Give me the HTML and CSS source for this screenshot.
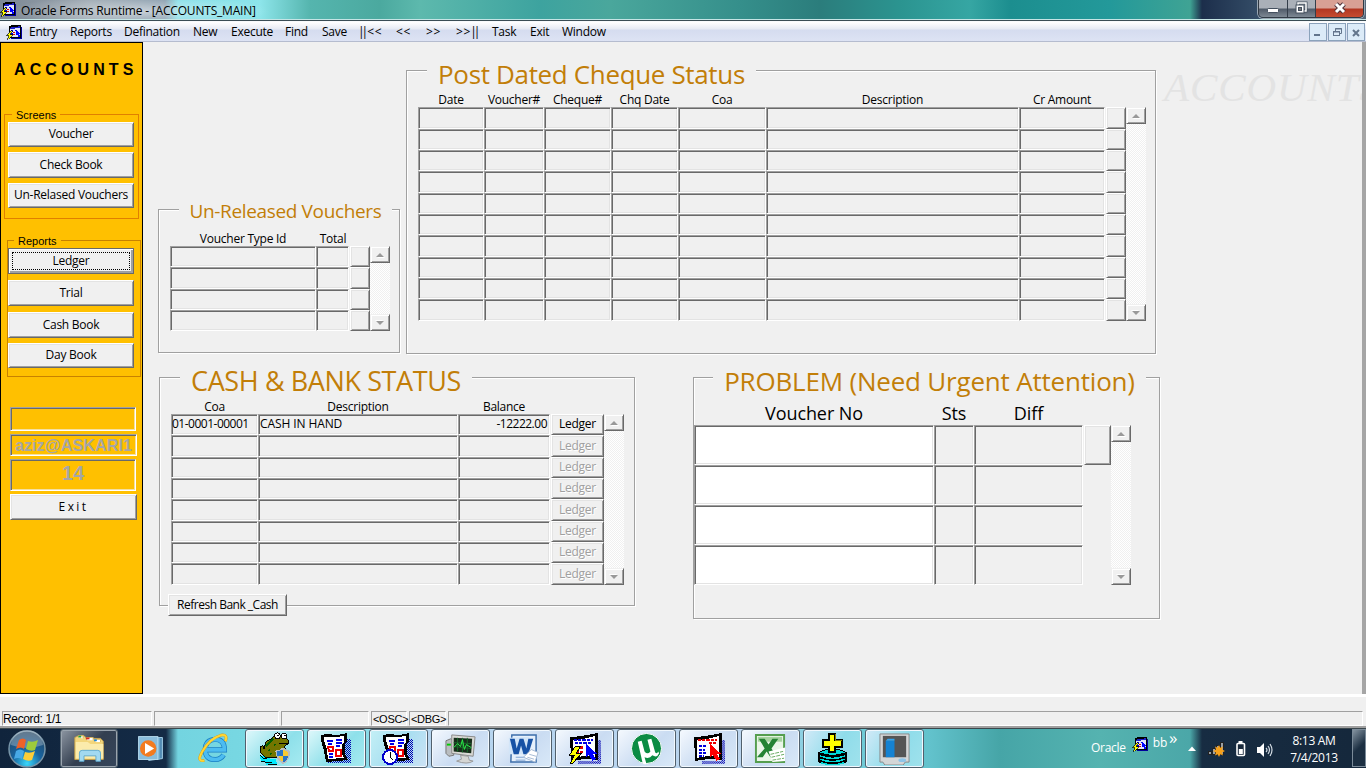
FILE: index.html
```html
<!DOCTYPE html>
<html lang="en">
<head>
<meta charset="utf-8">
<title>Oracle Forms Runtime - [ACCOUNTS_MAIN]</title>
<link rel="stylesheet" href="styles.css">
</head>
<body>
<svg class="defs" aria-hidden="true">
  <symbol id="forms" viewBox="0 0 32 32">
    <path d="M5 7L10 4H28V28H5Z" fill="#000"/><path d="M28 8H31V31H10V28H28Z" fill="#00009c"/>
    <path d="M7 9L26 6V26L7 26Z" fill="#dfe4fb"/><path d="M7 9L26 6V9L7 12Z" fill="#2020c8"/>
    <path d="M9 15H14M16 14H20M9 19H13M9 22H13" stroke="#0000e0" stroke-width="2"/>
    <path d="M14 18H17M14 22H17" stroke="#d00" stroke-width="2"/>
    <path d="M18 11V25L21 22L24 28L27 26L24 21H28Z" fill="#0000ff"/>
    <path d="M9 15L1 24H6L2 31L4 31L13 22H8L12 15Z" fill="#ff0" stroke="#000" stroke-width="1.3"/>
  </symbol>
  <symbol id="report" viewBox="0 0 32 32">
    <path d="M25 7H31V31H8V28H25Z" fill="url(#bluedots)"/>
    <path d="M1 3L7 2L17 3L27 1V9L25 11V22L28 28L18 29L6 30L4 19L1 8Z" fill="#000"/>
    <path d="M4 5L16 5L24 4V10L22 12V22L24 26L8 27L7 18L4 8Z" fill="#fff"/>
    <path d="M7 9H13M8 12H12M16 8H22M16 11H22M16 14H20M9 22H13M9 25H13" stroke="#0000e8" stroke-width="2"/>
    <path d="M8 15H13V19H9ZM16 18H21V24H16Z" fill="#fff" stroke="#e00" stroke-width="2"/>
  </symbol>
  <pattern id="bluedots" width="2" height="2" patternUnits="userSpaceOnUse"><rect width="1" height="1" fill="#0000b0"/><rect x="1" y="1" width="1" height="1" fill="#0000b0"/></pattern>
</svg>

<header class="titlebar">
  <svg class="ico16 crisp"><use href="#forms"/></svg>
  <span class="title">Oracle Forms Runtime - [ACCOUNTS_MAIN]</span>
  <div class="winbtns">
    <span class="wb"><svg width="28" height="17"><rect x="8.500" y="8.500" width="11" height="4" rx="1" fill="#fff" stroke="#44505f"/></svg></span>
    <span class="wb"><svg width="27" height="17"><rect x="10" y="3" width="8" height="8" fill="none" stroke="#44505f" stroke-width="3"/><rect x="10" y="3" width="8" height="8" fill="none" stroke="#fff" stroke-width="1.500"/><rect x="8" y="5" width="8" height="8" fill="#fff" stroke="#44505f"/><rect x="10.500" y="7.500" width="3" height="3" fill="#777" stroke="#44505f"/></svg></span>
    <span class="wb close"><svg width="47" height="17"><path d="M20 4L28 12M28 4L20 12" stroke="#4d3038" stroke-width="5"/><path d="M20 4L28 12M28 4L20 12" stroke="#fff" stroke-width="3"/></svg></span>
  </div>
</header>

<nav class="menubar">
  <svg class="ico16 crisp"><use href="#forms"/></svg>
  <span style="width:41px">Entry</span><span style="width:54px">Reports</span><span style="width:69px">Defination</span><span style="width:38px">New</span><span style="width:54px">Execute</span><span style="width:37px">Find</span><span style="width:37px">Save</span><span class="sym" style="width:37px"><em>||</em>&lt;&lt;</span><span class="sym" style="width:30px">&lt;&lt;</span><span class="sym" style="width:30px">&gt;&gt;</span><span class="sym" style="width:36px">&gt;&gt;<em>||</em></span><span style="width:38px">Task</span><span style="width:32px">Exit</span><span>Window</span>
  <div class="mdi">
    <i><svg width="16" height="16"><rect x="4" y="10" width="6" height="2" fill="#63758c"/></svg></i>
    <i><svg width="16" height="16" fill="none" stroke="#63758c"><path d="M6.500 7V4.500H12.500V9.500H11M6 5H13"/><rect x="4.500" y="7.500" width="6" height="4"/><path d="M4 8H11"/></svg></i>
    <i><svg width="16" height="16"><path d="M5 6L11 12M11 6L5 12" stroke="#63758c" stroke-width="2"/></svg></i>
  </div>
</nav>

<main class="work">
  <aside class="side">
    <h1>ACCOUNTS</h1>
    <section class="sgroup screens"><b>Screens</b>
      <button style="height:25px">Voucher</button><button style="height:26px;margin-top:5px">Check Book</button><button style="height:25px;margin-top:5px">Un-Relased Vouchers</button>
    </section>
    <section class="sgroup reports"><b>Reports</b>
      <button class="focus" style="height:26px">Ledger</button><button style="height:26px;margin-top:6px">Trial</button><button style="height:26px;margin-top:6px">Cash Book</button><button style="height:25px;margin-top:5px">Day Book</button>
    </section>
    <div class="sfield f1"></div>
    <div class="sfield f2">aziz@ASKARI1</div>
    <div class="sfield f3">14</div>
    <button class="exit">Exit</button>
  </aside>

  <div class="canvas">
    <div class="row top">
      <section class="box unrel">
        <h2>Un-Released Vouchers</h2>
        <div class="heads"><span>Voucher Type Id</span><span>Total</span></div>
        <div class="block"><div class="cells" id="unrel"></div><div class="scroll"><u></u><u class="dn"></u></div></div>
      </section>
      <section class="box pdc">
        <h2>Post Dated Cheque Status</h2>
        <div class="heads"><span>Date</span><span>Voucher#</span><span>Cheque#</span><span>Chq Date</span><span>Coa</span><span>Description</span><span>Cr Amount</span></div>
        <div class="block"><div class="cells" id="pdc"></div><div class="scroll"><u></u><u class="dn"></u></div></div>
      </section>
      <div class="ghost">ACCOUNTS</div>
    </div>
    <div class="row bottom">
      <section class="box cash">
        <h2>CASH &amp; BANK STATUS</h2>
        <div class="heads"><span>Coa</span><span>Description</span><span>Balance</span></div>
        <div class="block"><div class="cells" id="cash"></div><div class="scroll"><u></u><u class="dn"></u></div></div>
        <button class="refresh">Refresh Bank _Cash</button>
      </section>
      <section class="box prob">
        <h2>PROBLEM (Need Urgent Attention)</h2>
        <div class="heads"><span>Voucher No</span><span>Sts</span><span>Diff</span></div>
        <div class="block"><div class="cells" id="prob"></div><div class="scroll"><u></u><u class="dn"></u></div></div>
      </section>
    </div>
  </div>
  <div class="edge"></div>
</main>

<footer class="status">
  <span style="width:150px">Record: 1/1</span><span style="width:125px"></span><span style="width:88px"></span><span class="tag" style="width:36px">&lt;OSC&gt;</span><span class="tag" style="width:37px">&lt;DBG&gt;</span><span class="rest"></span>
</footer>

<div class="taskbar">
  <div class="start"><svg width="42" height="40" viewBox="0 0 42 40">
    <defs><radialGradient id="orb" cx=".5" cy=".9" r=".9"><stop offset="0" stop-color="#39d7fb"/><stop offset=".45" stop-color="#17639f"/><stop offset="1" stop-color="#27445f"/></radialGradient></defs>
    <circle cx="21" cy="20" r="18" fill="url(#orb)" stroke="#7895a8" stroke-width="1.500"/><path d="M5 16A16 15 0 0 1 37 16Q21 22 5 16" fill="#fff" opacity=".28"/>
    <path d="M13 11Q17 8 20 11L18 20Q15 17 10 20Z" fill="#ee6128"/><path d="M22 12Q27 14 32 11L29 21Q25 23 20 20Z" fill="#9ccb3b"/><path d="M10 22Q14 19 18 22L16 30Q12 28 8 30Z" fill="#48a9e6"/><path d="M19 23Q24 25 29 22L26 31Q22 33 17 30Z" fill="#fccd38"/></svg></div>
  <div class="tb dark"><svg viewBox="0 0 36 34"><path d="M2 29V5L6 3H12L15 6H30L33 9V29Z" fill="#f3d67c" stroke="#c7a24b"/><path d="M6 5V3H11V6M15 8V5H22V8M24 10V7H30V10" fill="#fff" stroke="#d9b65c"/><path d="M6 4H9" stroke="#20a040" stroke-width="2"/><path d="M14 6H18" stroke="#d42b20" stroke-width="2"/><path d="M23 8H26" stroke="#2088d8" stroke-width="2"/><path d="M3 10H16L19 12H33V28H3Z" fill="#fbebac"/><path d="M7 30V22Q7 19 10 19H27Q30 19 30 22V31H25V25H12V31H7Z" fill="#a2d9f1" stroke="#5ca7cf"/></svg></div>
  <div class="tb plain"><svg viewBox="0 0 36 34"><path d="M14 5H31V28L16 30Z" fill="#528bb3" stroke="#a9d4eb"/><path d="M11 5H28V29H11Z" fill="#77b3d6"/><rect x="5" y="4" width="21" height="25" fill="#8abddc" stroke="#b9ddef"/><circle cx="15.500" cy="17" r="9" fill="#f37b20"/><path d="M12 11V23L22 17Z" fill="#fff"/></svg></div>
  <div class="tb plain ie"><svg viewBox="0 0 36 34"><path d="M9 18.500H30Q30 7 19.500 7Q9 8 9 18.500Q9 29 20 29Q26 29 29 24" fill="none" stroke="#1a7fc4" stroke-width="5.500"/><path d="M9 18.500H30Q30 7 19.500 7Q9 8 9 18.500Q9 29 20 29Q26 29 29 24" fill="none" stroke="#4dbcf0" stroke-width="4"/><path d="M8 30Q-1 32 6 20Q14 6 26 2.500Q34 1 31 9" fill="none" stroke="#d89a10" stroke-width="3"/><path d="M8 30Q-1 32 6 20Q14 6 26 2.500Q34 1 31 9" fill="none" stroke="#ffd633" stroke-width="2.200"/></svg></div>
  <div class="tb cyan"><svg class="crisp" viewBox="0 0 34 34"><path d="M2 26H12M3 29H19M8 32H20" stroke="#00eaff" stroke-width="3"/><path d="M2 24L5 27H9M3 30L8 31H14M10 33H20" stroke="#000" fill="none"/><path d="M2 15L5 14L6 18L8 10L14 7L17 4L22 3L29 6L31 8V12L27 15L31 22L27 26H8L3 22Z" fill="#747500" stroke="#000"/><path d="M8 15L16 7" stroke="#006000" stroke-width="2"/><path d="M18 12L17 14M12 18L11 20M20 18L19 20M25 18H27M14 23L12 22" stroke="#006000" stroke-width="1.500"/><circle cx="20" cy="4" r="3" fill="#fff" stroke="#000"/><circle cx="27" cy="4" r="3" fill="#fff" stroke="#000"/><path d="M20 4H22M27 4H29M22 12H31" stroke="#000"/><path d="M19 20Q24 19 26 17Q29 19 32 20Q32 29 26 32Q20 29 19 20Z" fill="#f7cb32" stroke="#b9bcbf" stroke-width="2"/><path d="M26 18V25H20V20ZM26 25H31Q30 30 26 31Z" fill="#2875c6"/></svg></div>
  <div class="tb cyan"><svg class="crisp" viewBox="0 0 33 33"><use href="#report" width="32" height="32"/></svg></div>
  <div class="tb mid"><svg class="crisp" viewBox="0 0 33 33"><use href="#report" width="32" height="32"/><circle cx="8" cy="25" r="7" fill="#fff" stroke="#00c" stroke-width="2"/><path d="M8 20V25L11 28" fill="none" stroke="#000"/></svg></div>
  <div class="tb"><svg viewBox="0 0 34 34"><path d="M2 9L7 7L10 9V24L5 25L2 22Z" fill="#b9bdc0" stroke="#777"/><path d="M3 13H7" stroke="#0c0" stroke-width="2"/><path d="M8 3L32 5L30 25L8 22Z" fill="#d9d9d5" stroke="#888"/><path d="M10 6L29 7L28 22L10 20Z" fill="#172d1b"/><path d="M10 11L28 12M10 15L28 17M14 6V20M19 6V21M24 6V21" stroke="#176b28"/><path d="M10 16L14 12L17 15L19 8L21 18L23 13L28 16" stroke="#2aed48" fill="none"/><path d="M17 24L25 25L26 29L30 30Q24 34 13 30L18 28Z" fill="#d5d6d4" stroke="#999"/></svg></div>
  <div class="tb"><svg viewBox="0 0 34 34"><path d="M6 3H31V31H5Z" fill="#e6f0fb" stroke="#3c6eab" stroke-width="1.500"/><path d="M3 6L24 5V23H3Z" fill="#d2e5f8"/><path d="M4 7H9L11 17L14 7H18L21 17L23 7H28L23 23H18L15.500 14L13 23H8Z" fill="#1752a5"/><path d="M10 26H22M10 29H20" stroke="#7da3d3"/><path d="M18 26L26 18L33 21L30 31Z" fill="#fff" stroke="#a5bad4"/><path d="M22 26L29 28M24 23L31 25" stroke="#a5bad4"/></svg></div>
  <div class="tb"><svg class="crisp" viewBox="0 0 32 32"><path d="M28 8H32V31H10V28H28Z" fill="url(#bluedots)"/><path d="M2 5L12 4L29 1V27L18 26L3 28Z" fill="#000"/><path d="M5 8L14 7L26 4V24L17 23L5 25Z" fill="#fff"/><path d="M6 8H24M7 11H22" stroke="#00d" stroke-width="2" stroke-dasharray="3 1"/><path d="M8 15H15M8 19H15" stroke="#d00" stroke-width="2" stroke-dasharray="3 1"/><path d="M17 11V25L20 22L24 28L27 26L24 21H28Z" fill="#00f"/><path d="M7 14L1 23H6L2 31H4L13 21H8L12 14Z" fill="#ff0" stroke="#000"/></svg></div>
  <div class="tb"><svg viewBox="0 0 34 34"><circle cx="17" cy="17" r="15.500" fill="#0b8c43" stroke="#fff"/><path d="M8 10L12 9L15 20Q18 24 21 20L18 8L22 7L26 21Q28 23 29 20L30 22Q28 27 23 24Q20 28 15 26L17 33Q14 34 13 32Z" fill="#fff"/></svg></div>
  <div class="tb"><svg class="crisp" viewBox="0 0 32 32"><path d="M28 8H32V31H10V28H28Z" fill="url(#bluedots)"/><path d="M2 5L12 4L29 1V27L18 26L3 28Z" fill="#000"/><path d="M5 8L14 7L26 4V24L17 23L5 25Z" fill="#fff"/><path d="M6 8H24M16 11H24" stroke="#e00" stroke-width="2" stroke-dasharray="3 1"/><path d="M7 14H14M7 17H13M7 20H14M7 23H12" stroke="#00d" stroke-width="2" stroke-dasharray="3 1"/><path d="M17 11V25L20 22L24 28L27 26L24 21H28Z" fill="#f00"/></svg></div>
  <div class="tb"><svg viewBox="0 0 34 34"><path d="M2 3H31V31H2Z" fill="#eaf6e8" stroke="#559e4f" stroke-width="2"/><path d="M4 5H29V10H4Z" fill="#a6d3a0"/><path d="M5 7H11L15 13L19 7H25L18 17L24 26H17L13 20L9 26H3L11 17Z" fill="#248333"/><path d="M15 20L32 16V30L19 31Z" fill="#fff"/><path d="M17 23L30 20M18 26L31 23M19 29L31 27" stroke="#68aa62" stroke-dasharray="4 1"/></svg></div>
  <div class="tb cyan2"><svg class="crisp" viewBox="0 0 34 34"><path d="M2 21Q17 13 32 21V31Q17 37 2 31Z" fill="#000"/><path d="M4 21Q17 15 30 21Q17 26 4 21" fill="#00d8d8"/><path d="M4 24.500Q17 30 30 24.500M4 28Q17 33 30 28M5 31.500Q17 36 29 31.500" fill="none" stroke="#00d8d8" stroke-width="1.500"/><path d="M13 2H20V8H27V15H20V21H13V15H7V8H13Z" fill="#ff0" stroke="#000" stroke-width="2"/><path d="M20 2V9H27" stroke="#908800" fill="none"/></svg></div>
  <div class="tb cyan2 last"><svg viewBox="0 0 34 34"><path d="M2 2H32V31L28 31L26 34H7L5 31H2Z" fill="#d4d6d7" stroke="#888"/><rect x="5" y="4" width="24" height="22" fill="#555"/><rect x="8" y="9" width="9" height="17" fill="#1582d2"/><path d="M8 9L10 7H17V9" fill="#35a4ed"/><ellipse cx="25" cy="29" rx="4" ry="2" fill="#8cc4e8"/></svg></div>
  <div class="tray">
    <span class="ora">Oracle</span><svg class="ico16 crisp"><use href="#forms"/></svg><span class="bb">bb</span><span class="more">»</span>
    <svg class="icons" width="90" height="40"><path d="M4 22L8 17.500L12 22Z" fill="#fff"/><g fill="#9aa0a6" stroke="#222"><rect x="24.500" y="22.500" width="3" height="3"/><rect x="28.500" y="19.500" width="3" height="6"/><rect x="32.500" y="16.500" width="3" height="9"/><rect x="36.500" y="13.500" width="3" height="12"/></g><path d="M35 16L36.300 18.700L39 17.500L38 20.500L41 22L38 23.500L39 26.500L36.300 25.300L35 28L33.700 25.300L31 26.500L32 23.500L29 22L32 20.500L31 17.500L33.700 18.700Z" fill="#f7a11b"/><rect x="53" y="14.500" width="7.500" height="12" rx="1" fill="#1a2a3c" stroke="#fff" stroke-width="1.600"/><rect x="54.500" y="12" width="4" height="2" fill="#fff"/><rect x="54.800" y="20" width="4" height="5" fill="#fff"/><path d="M73 18H76L80 14V28L76 24H73Z" fill="#fff"/><path d="M82 19Q84 21 82 23M84 17Q87 21 84 25M86 15Q90 21 86 27" fill="none" stroke="#d5dde5" stroke-width="1.200"/></svg>
    <div class="clock">8:13 AM<br>7/4/2013</div><div class="peek"></div>
  </div>
</div>
<script src="cells.js"></script>
</body>
</html>
```
FILE: styles.css
```css
* { box-sizing: border-box; }
body { margin: 0; width: 1366px; height: 768px; overflow: hidden; display: flex; flex-direction: column; background: #f0f0f0; color: #000; font: 12px "Open Sans", "Noto Sans", sans-serif; letter-spacing: -.25px; }
.defs { position: absolute; width: 0; height: 0; }
.ico16 { width: 17px; height: 17px; flex: none; display: block; }
.crisp { shape-rendering: crispEdges; }

.titlebar { height: 21px; flex: none; display: flex; border-bottom: 1px solid #3a4d55; box-shadow: inset 0 -1px #c5e5e5;
  background: radial-gradient(ellipse 130px 16px at 140px 11px, rgba(255,255,255,.55), transparent),
  linear-gradient(90deg, #7d8894 0, #98a4ae 90px, #7e94a6 165px, #7fdce6 178px, #8de5ea 260px, #55b5ae 310px, #4ba99f 380px, #5db9ad 420px, #3da39f 540px, #4aa79c 610px, #358f8b 740px, #2b7d7c 820px, #2b9490 900px, #36a6a3 970px, #1c8e8f 1010px, #23999a 1110px, #3fa394 1190px, #1c2e4b 1202px, #354e68 1260px, #56687a); }
.title { padding: 2px 0 0 4px; line-height: 17px; letter-spacing: -.19px; }
.winbtns { margin-left: auto; margin-right: 2px; height: 18px; display: flex; border: 1px solid #303a44; border-top: 0; border-radius: 0 0 5px 5px; overflow: hidden; box-shadow: 0 0 0 1px #9aa8b4; }
.wb { background: linear-gradient(#aab0b8 0 8px, #505b69 9px, #7e8994); border-right: 1px solid #343e4a; height: 17px; }
.wb svg { display: block; }
.wb.close { border: 0; background: linear-gradient(#d8a094 0 8px, #b23722 9px, #c64c30); }

.menubar { height: 21px; flex: none; display: flex; padding: 1px 0 0 7px; border-bottom: 1px solid #b5bccf; border-top: 1px solid #f8fafc; background: linear-gradient(#fff, #e6eaf4 7px, #d5dcef 8px, #dde3f4); line-height: 18px; }
.menubar .ico16 { margin: 0 6px 0 -1px; }
.menubar .sym { letter-spacing: .7px; white-space: nowrap; }
.menubar em { font-style: normal; letter-spacing: -3px; margin: 0 2px 0 -1px; }
.mdi { display: flex; gap: 1px; margin: 0 1px 0 auto; }
.mdi i { width: 18px; height: 18px; border: 1px solid #8ba2bb; background: #dcebf8; }
.mdi svg { display: block; }

.work { height: 652px; flex: none; display: flex; }
.side { width: 143px; flex: none; background: #ffc000; border: 1px solid #000; padding: 17px 0 0 3px; }
h1 { margin: 0 0 34px 10px; font: bold 16px/20px "Liberation Sans", Arial, sans-serif; letter-spacing: 4.1px; }
button { display: block; padding: 0 0 2px; font: inherit; letter-spacing: inherit; color: #000; border: 1px solid; border-color: #fff #696969 #696969 #fff; border-radius: 0; background: #f0f0f0; box-shadow: inset 1px 1px #e3e3e3, inset -1px -1px #a0a0a0; }
.sgroup { border: 1px solid #e08000; display: flow-root; }
.sgroup b { display: block; width: max-content; padding: 0 4px; margin: -7px 0 0 7px; font: 11px/14px "Liberation Sans", Arial, sans-serif; letter-spacing: 0; background: #ffc000; }
.sgroup button { width: 126px; }
.screens { width: 135px; height: 105px; padding-left: 3px; }
.reports { width: 134px; height: 137px; margin: 21px 0 0 3px; border-color: #c88200; }
.screens b { margin-left: 4px; }
.reports b { margin-left: 6px; }
.focus { border: 1px solid #696969; box-shadow: inset 1px 1px #fff, inset -2px -2px #a0a0a0; outline: 1px dotted #000; outline-offset: -5px; }
.sfield { width: 126px; margin-left: 6px; border: 1px solid; border-color: #a0a0a0 #fff #fff #a0a0a0; box-shadow: inset 1px 1px #696969, inset -1px -1px #f4dfa0; font: bold 16.3px/21px "Liberation Sans", Arial, sans-serif; letter-spacing: 0; color: #a6a6a6; text-align: center; white-space: nowrap; }
.f1 { height: 24px; margin-top: 30px; }
.f2 { width: 127px; height: 22px; margin-top: 3px; }
.f3 { height: 32px; margin-top: 3px; font-size: 20px; line-height: 27px; }
.exit { width: 127px; height: 26px; margin: 3px 0 0 6px; letter-spacing: 2.4px; }

.canvas { width: 1219px; flex: none; overflow: hidden; padding-top: 28px; }
.edge { flex: 1; background: #a5a5a5; }
.row { display: flex; width: 1260px; }
.top { height: 284px; }
.bottom { margin-top: 23px; }
.box { flex: none; border: 1px solid #a0a0a0; box-shadow: 1px 1px #fff, inset 1px 1px #fff; }
.unrel { width: 242px; height: 144px; margin: 139px 0 0 15px; }
.pdc { width: 750px; height: 284px; margin-left: 6px; }
.cash { width: 476px; height: 229px; margin-left: 16px; }
.prob { width: 467px; height: 242px; margin-left: 58px; }
h2 { margin: -14px 0 0 20px; padding: 0; text-align: center; color: #c27e08; background: #f0f0f0; font: 26px/34px "Open Sans", "Noto Sans", sans-serif; letter-spacing: -.35px; white-space: nowrap; }
.pdc h2 { width: 329px; }
.unrel h2 { width: 213px; font-size: 19px; line-height: 28px; margin-top: -13px; letter-spacing: -.35px; }
.cash h2 { width: 292px; font-size: 27px; letter-spacing: -.4px; }
.prob h2 { width: 433px; margin-left: 19px; letter-spacing: -.2px; }
.heads { display: grid; text-align: center; line-height: 16px; height: 16px; margin-left: 11px; white-space: nowrap; }
.block { display: flex; margin-left: 11px; }
.cells { display: grid; }
.cells div { border: 1px solid; border-color: #a0a0a0 #fff #fff #a0a0a0; box-shadow: inset 1px 1px #696969, inset -1px -1px #e3e3e3; line-height: 17px; white-space: nowrap; letter-spacing: -.5px; }
#cash div:nth-child(2) { padding-left: 1px; letter-spacing: -.1px; }
.cells div.num { text-align: right; padding-right: 2px; }
.cells button { margin-left: 1px; }
.cells button:disabled { color: #a0a0a0; text-shadow: 1px 1px #fff; }
.scroll { width: 20px; display: flex; flex-direction: column; justify-content: space-between; background: repeating-conic-gradient(#fff 0 25%, #f0f0f0 0 50%) 0 0/2px 2px; }
.scroll u { height: 17px; border: 1px solid; border-color: #f0f0f0 #696969 #696969 #f0f0f0; background: #f0f0f0; box-shadow: inset 1px 1px #fff, inset -1px -1px #a0a0a0; display: grid; place-items: center; }
.scroll u::after { content: ""; border: 4px solid transparent; border-top: 0; border-bottom-color: #999; filter: drop-shadow(1px 1px #fff); }
.scroll u.dn::after { transform: rotate(180deg); }

.unrel .heads { grid-template-columns: 146px 34px; margin-top: 6px; height: 15px; }
#unrel { grid-template-columns: 146px 33px 21px; grid-template-rows: 21px 22px 21px 21px; }
.pdc .heads, #pdc { grid-template-columns: 66px 60px 67px 67px 88px 253px 86px 21px; grid-template-rows: repeat(3, 22px 21px 21px) 22px; }
.pdc .heads { margin-top: 1px; height: 15px; }
.cash .heads, #cash { grid-template-columns: 87px 200px 92px 54px; grid-template-rows: 21px 22px 21px 21px 22px 21px 21px 22px; }
.cash .heads { margin-top: 1px; height: 15px; }
.prob .heads { grid-template-columns: 240px 40px 109px; font-size: 18px; line-height: 24px; height: 24px; margin: 3px 0 0; letter-spacing: -.1px; }
.prob .block { margin: 0; }
#prob { grid-template-columns: 240px 40px 109px 28px; grid-template-rows: repeat(4, 40px); }
#prob .white { background: #fff; }
.refresh { width: 119px; height: 22px; margin: 9px 0 0 8px; position: relative; letter-spacing: -.5px; }
.ghost { margin: -6px 0 0 8px; font: italic 41px/46px "Liberation Serif", serif; color: #e3e3e3; letter-spacing: .9px; }

.status { height: 34px; flex: none; display: flex; gap: 2px; padding: 14px 3px 0 2px; border-top: 3px solid #fff; border-bottom: 2px solid #a0a0a0; }
.status span { height: 15px; border: 1px solid; border-color: #a0a0a0 #fff #fff #a0a0a0; font: 12px/14px "Liberation Sans", Arial, sans-serif; letter-spacing: -.35px; white-space: nowrap; }
.status .tag { font-size: 11px; letter-spacing: -.3px; padding-left: 1px; }
.status .rest { flex: 1; }

.taskbar { height: 40px; flex: none; display: flex; border-top: 1px solid #3b474d; background: linear-gradient(90deg, #10243c 0, #142b46 166px, #73d4e0 178px, #7fdde6 350px, #b6d5ef 430px, #bad4ee 750px, #75cedb 830px, #62c2cc 930px, #46a5a7 1000px, #55b3b0 1100px, #4ba7a8 1190px, #172c42 1202px, #15283c 1350px); }
.start { width: 60px; padding-left: 6px; flex: none; }
.tb { width: 59px; margin-right: 3px; flex: none; display: grid; place-items: center; border: 1px solid #51606d; border-radius: 3px; background: linear-gradient(135deg, #f5f9fe, #cadcf2 55%, #d9e9f8); box-shadow: inset 0 0 0 1px #f1f8fe; }
.tb svg { width: 33px; height: 33px; }
.tb.dark { width: 58px; margin-right: 0; background: linear-gradient(135deg, #8d96a2, #333f50 50%, #35455b); box-shadow: inset 0 0 0 1px #9aa4ae; }
.tb.plain { width: 64px; margin: 0; border: 0; background: none; box-shadow: none; }
.tb.ie { width: 63px; }
.tb.cyan { background: linear-gradient(135deg, #dff8fb, #8ee0ea 55%, #a7ebf1); }
.tb.mid { background: linear-gradient(120deg, #c4f0f6, #a7def0 50%, #cde2f5); }
.tb.cyan2 { background: linear-gradient(120deg, #d3eaf8, #8fdcea 55%, #a0e2ec); }
.tray { margin-left: auto; display: flex; color: #fff; }
.ora { padding: 10px 6px 0 0; }
.tray .ico16 { margin-top: 6px; }
.bb { padding: 5px 2px 0 4px; }
.more { font-size: 17px; line-height: 17px; width: 15px; }
.icons { flex: none; }
.clock { width: 76px; text-align: center; line-height: 17px; padding-top: 3px; margin-left: 2px; letter-spacing: -.3px; }
.peek { width: 14px; height: 38px; border: 1px solid #7b8b99; background: linear-gradient(135deg, #8493a0, #1c2f42 50%); }
```
FILE: cells.js
```js
// Builds the record rows of every data block.
function fill(id, rows, make) {
  const host = document.getElementById(id);
  for (let r = 0; r < rows; r++) make(r).forEach(el => host.appendChild(el));
}
function cell(text = "", cls = "") {
  const d = document.createElement("div");
  d.textContent = text;
  if (cls) d.className = cls;
  return d;
}
function btn(text = "", off = false) {
  const b = document.createElement("button");
  b.textContent = text;
  b.disabled = off;
  return b;
}
fill("unrel", 4, () => [cell(), cell(), btn()]);
fill("pdc", 10, () => [cell(), cell(), cell(), cell(), cell(), cell(), cell(), btn()]);
fill("cash", 8, r => r === 0
  ? [cell("01-0001-00001"), cell("CASH IN HAND"), cell("-12222.00", "num"), btn("Ledger")]
  : [cell(), cell(), cell(), btn("Ledger", true)]);
fill("prob", 4, r => {
  const row = [cell("", "white"), cell(), cell()];
  row.push(r === 0 ? btn() : document.createElement("span"));
  return row;
});
```
